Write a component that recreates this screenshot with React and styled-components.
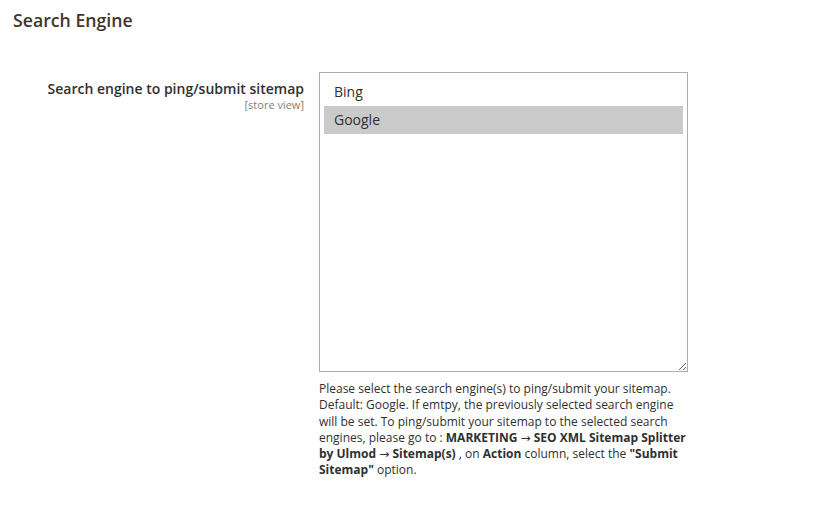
import React from 'react'
import styled, { createGlobalStyle } from 'styled-components'

const Global = createGlobalStyle`
  body {
    margin: 0;
    background: #fff;
    font-family: "Open Sans", "Liberation Sans", sans-serif;
    color: #303030;
  }
`

const Page = styled.div`
  width: 823px;
  height: 519px;
  box-sizing: border-box;
  padding: 8px 0 0 13px;
`

const Title = styled.h2`
  margin: 0;
  font-size: 17.7px;
  line-height: 24px;
  font-weight: 600;
  color: #41362f;
`

const Row = styled.div`
  display: grid;
  grid-template-columns: 291px 369px;
  column-gap: 15px;
  margin-top: 40px;
`

const Label = styled.div`
  text-align: right;
  padding-top: 7px;
`

const LabelText = styled.div`
  font-size: 14px;
  font-weight: 600;
  line-height: 20px;
`

const Scope = styled.div`
  font-size: 11px;
  line-height: 12px;
  color: #808080;
`

const Control = styled.div`
  display: flex;
  flex-direction: column;
`

const List = styled.div`
  box-sizing: border-box;
  height: 300px;
  border: 1px solid #adadad;
  padding: 5px 4px;
  overflow: auto;
  resize: both;
`

const Option = styled.div`
  height: 28px;
  line-height: 28px;
  padding-left: 10px;
  font-size: 14px;
  color: #303030;
  background: ${p => (p.selected ? '#cacaca' : 'transparent')};
`

const Note = styled.div`
  margin-top: 9px;
  font-size: 12px;
  line-height: 16.3px;
  color: #303030;
  strong {
    font-weight: 700;
  }
`

const Arrow = styled.span`
  font-family: "DejaVu Sans", sans-serif;
  font-weight: 400;
`

export default function App() {
  return (
    <Page>
      <Global />
      <Title>Search Engine</Title>
      <Row>
        <Label>
          <LabelText>Search engine to ping/submit sitemap</LabelText>
          <Scope>[store view]</Scope>
        </Label>
        <Control>
          <List>
            <Option>Bing</Option>
            <Option selected>Google</Option>
          </List>
          <Note>
            Please select the search engine(s) to ping/submit your sitemap. Default: Google. If emtpy,
            the previously selected search engine will be set. To ping/submit your sitemap to the
            selected search engines, please go to : <strong>MARKETING <Arrow>→</Arrow> SEO XML Sitemap
            Splitter by Ulmod <Arrow>→</Arrow> Sitemap(s)</strong> , on <strong>Action</strong> column,
            select the <strong>"Submit Sitemap"</strong> option.
          </Note>
        </Control>
      </Row>
    </Page>
  )
}
